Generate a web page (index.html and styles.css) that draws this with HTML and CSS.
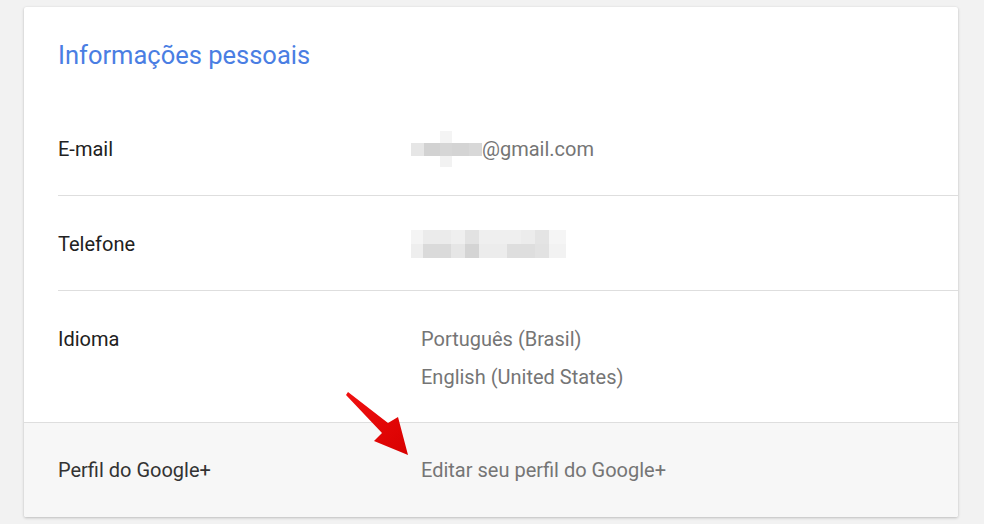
FILE: index.html
```html
<!DOCTYPE html>
<html lang="pt-BR">
<head>
<meta charset="utf-8">
<title>Informações pessoais</title>
<link rel="stylesheet" href="styles.css">
</head>
<body>
<div class="card">
  <div class="header">
    <h1 class="title">Informações pessoais</h1>
  </div>
  <div class="row">
    <div class="label">E-mail</div>
    <div class="value">
      <span class="email">
        <svg class="blur-email" width="71" height="36" viewBox="0 0 71 36" aria-hidden="true">
          <rect x="29" y="0" width="12" height="12" fill="#f4f4f4"/>
          <rect x="0" y="12" width="13" height="13" fill="#e6e6e6"/>
          <rect x="13" y="12" width="16" height="13" fill="#d2d2d2"/>
          <rect x="29" y="12" width="12" height="13" fill="#d6d6d6"/>
          <rect x="41" y="12" width="17" height="13" fill="#d4d4d4"/>
          <rect x="58" y="12" width="13" height="13" fill="#d8d8d8"/>
          <rect x="29" y="25" width="12" height="11" fill="#f2f2f2"/>
        </svg><span>@gmail.com</span>
      </span>
    </div>
  </div>
  <div class="row">
    <div class="label">Telefone</div>
    <div class="value">
      <svg class="blur-phone" width="155" height="28" viewBox="0 0 155 28" aria-hidden="true">
        <rect x="0" y="0" width="12" height="14" fill="#f4f4f4"/>
        <rect x="12" y="0" width="28" height="14" fill="#ebebeb"/>
        <rect x="40" y="0" width="14" height="14" fill="#efefef"/>
        <rect x="54" y="0" width="14" height="14" fill="#e2e2e2"/>
        <rect x="68" y="0" width="42" height="14" fill="#efefef"/>
        <rect x="110" y="0" width="14" height="14" fill="#ececec"/>
        <rect x="124" y="0" width="14" height="14" fill="#e4e4e4"/>
        <rect x="138" y="0" width="17" height="14" fill="#f5f5f5"/>
        <rect x="0" y="14" width="12" height="14" fill="#eeeeee"/>
        <rect x="12" y="14" width="28" height="14" fill="#dadada"/>
        <rect x="40" y="14" width="14" height="14" fill="#e6e6e6"/>
        <rect x="54" y="14" width="14" height="14" fill="#d4d4d4"/>
        <rect x="68" y="14" width="28" height="14" fill="#ececec"/>
        <rect x="96" y="14" width="28" height="14" fill="#dedede"/>
        <rect x="124" y="14" width="14" height="14" fill="#e2e2e2"/>
        <rect x="138" y="14" width="17" height="14" fill="#f2f2f2"/>
      </svg>
    </div>
  </div>
  <div class="row row-last">
    <div class="label">Idioma</div>
    <div class="value value-list">
      <span>Português (Brasil)</span>
      <span>English (United States)</span>
    </div>
  </div>
  <div class="footer">
    <div class="label">Perfil do Google+</div>
    <div class="value">Editar seu perfil do Google+</div>
    <svg class="arrow" width="80" height="80" viewBox="0 0 80 80" aria-hidden="true">
      <defs>
        <linearGradient id="ag" x1="0" y1="0" x2="1" y2="1">
          <stop offset="0" stop-color="#f01010"/>
          <stop offset="1" stop-color="#d80000"/>
        </linearGradient>
      </defs>
      <polygon points="2,2 42,33 52,27 62,65 28,51 36,43 0,5" fill="url(#ag)"/>
    </svg>
  </div>
</div>
</body>
</html>
```
FILE: styles.css
```css
* { box-sizing: border-box; }
html, body { margin: 0; padding: 0; }
body {
  background: #f2f2f2;
  font-family: Roboto, "Liberation Sans", Arial, sans-serif;
  width: 984px;
  height: 524px;
  overflow: hidden;
}
.card {
  margin: 7px 0 0 24px;
  width: 934px;
  height: 510px;
  background: #fff;
  box-shadow: 0 1px 3px rgba(0,0,0,0.22), 0 0 1px rgba(0,0,0,0.08);
  border-radius: 2px;
  overflow: hidden;
}
.header {
  padding: 33px 0 0 34px;
  height: 94px;
}
.title {
  margin: 0;
  font-size: 25.5px;
  line-height: 30px;
  font-weight: 400;
  color: #4a7ee3;
}
.row {
  display: flex;
  margin-left: 34px;
  padding: 38px 0 36px;
  border-bottom: 1px solid #dedede;
  font-size: 20px;
  line-height: 20px;
  height: 95px;
}
.row-last {
  margin-left: 0;
  padding-left: 34px;
  height: 132px;
}
.label {
  width: 363px;
  flex: none;
  color: #212121;
}
.value {
  color: #757575;
}
.email {
  display: flex;
  align-items: center;
  height: 20px;
  margin-left: -10px;
}
.blur-email {
  display: block;
  flex: none;
  margin: -8px 0;
}
.blur-phone {
  display: block;
  margin: -4px 0 -4px -10px;
}
.value-list {
  display: flex;
  flex-direction: column;
  gap: 18px;
}
.footer {
  position: relative;
  display: flex;
  padding: 37px 0 0 34px;
  height: 95px;
  background: #f7f7f7;
  font-size: 20px;
  line-height: 20px;
}
.footer .label { color: #333; }
.arrow {
  position: absolute;
  left: 322px;
  top: -33px;
}
```
